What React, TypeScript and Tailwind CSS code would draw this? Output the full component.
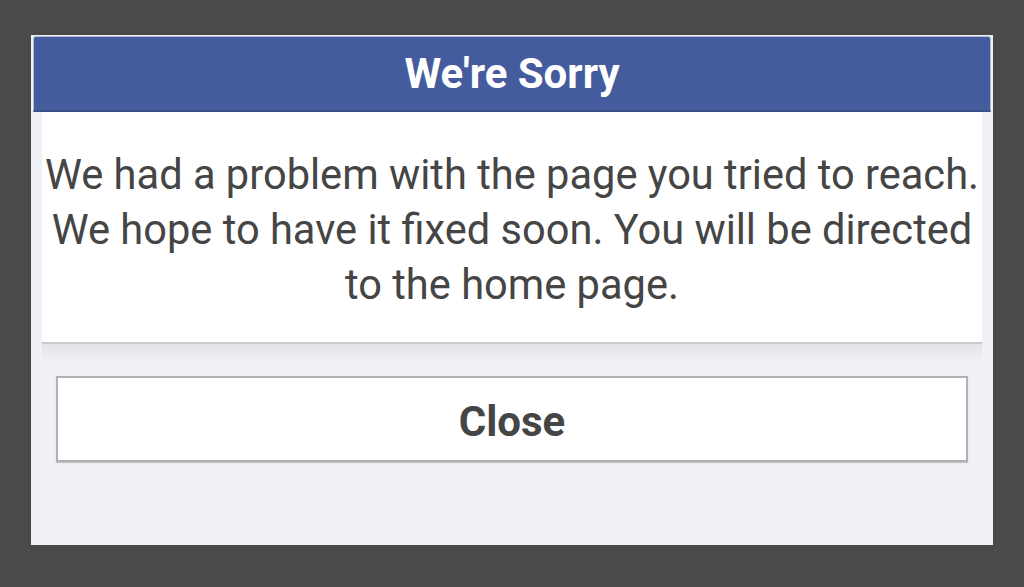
export default function App() {
  return (
    <div className="flex h-[587px] w-full justify-center bg-[#4a4a4a] pt-[35px] font-['Roboto',sans-serif]">
      <div className="flex h-[510px] w-[962px] flex-col bg-[#f0f1f5]">
        <div className="mx-[2px] mt-px flex h-[76px] items-center justify-center rounded-t-[3px] border border-b-2 border-[#b4bcd2] border-b-[#3a4f8a] bg-[#445c9e] text-[42px] font-bold text-white">
          We're Sorry
        </div>
        <div className="mx-[11px] whitespace-nowrap bg-white pt-[35px] pb-[30px] text-center text-[41.6px] leading-[55px] text-[#454545]">
          We had a problem with the page you tried to reach.
          <br />
          We hope to have it fixed soon. You will be directed
          <br />
          to the home page.
        </div>
        <div className="mx-[11px] h-[2px] bg-[#c9cacd]" />
        <div className="mx-[11px] h-[18px] bg-linear-to-b from-[#e3e4e6] to-[#f0f1f5]" />
        <button className="mx-[25px] mt-[14px] flex h-[86px] items-center justify-center border-2 border-[#b1b1b3] bg-white pt-[4px] text-[42px] font-bold text-[#454545] shadow-[0_1px_1px_rgba(0,0,0,0.18)]">
          Close
        </button>
      </div>
    </div>
  )
}
